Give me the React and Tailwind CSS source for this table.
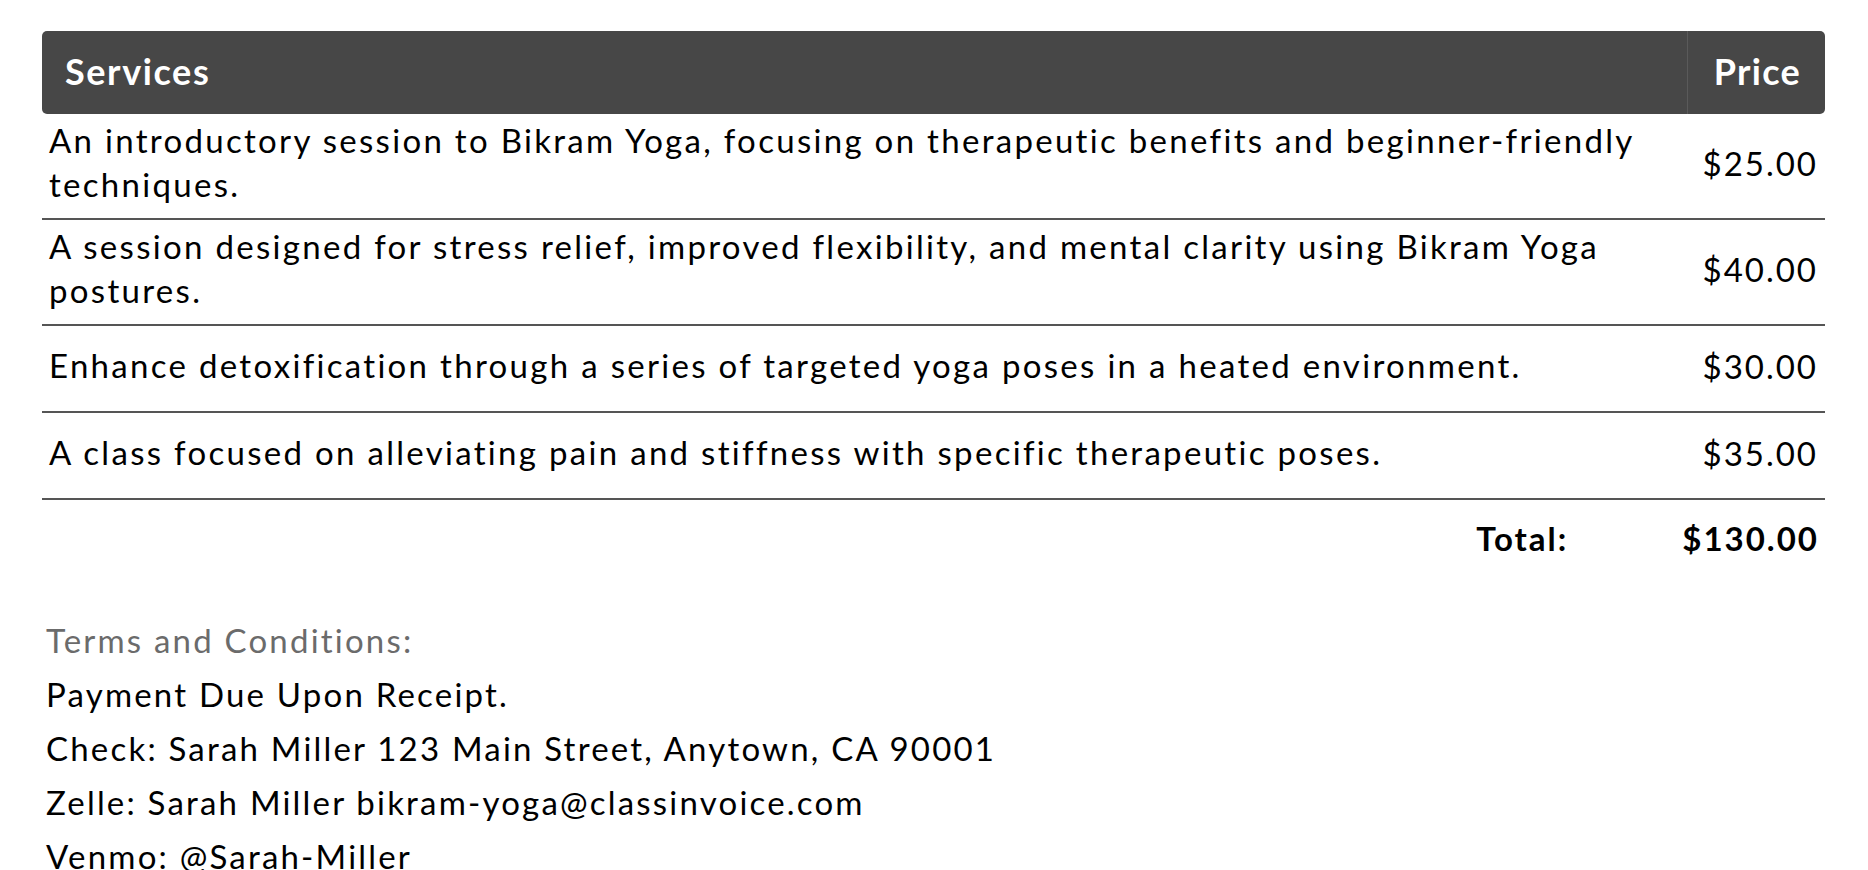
const items = [
  {
    desc: "An introductory session to Bikram Yoga, focusing on therapeutic benefits and beginner-friendly techniques.",
    price: "$25.00",
  },
  {
    desc: "A session designed for stress relief, improved flexibility, and mental clarity using Bikram Yoga postures.",
    price: "$40.00",
  },
  {
    desc: "Enhance detoxification through a series of targeted yoga poses in a heated environment.",
    price: "$30.00",
  },
  {
    desc: "A class focused on alleviating pain and stiffness with specific therapeutic poses.",
    price: "$35.00",
  },
];

const App = () => {
  return (
    <div
      className="min-h-screen bg-white text-black pl-[42px] pr-[43px] pt-[31px]"
      style={{ fontFamily: "Lato, 'Noto Sans', sans-serif" }}
    >
      {/* Services table */}
      <table className="w-full border-collapse">
        <thead>
          <tr className="h-[83px]">
            <th className="bg-[#474747] text-white text-left font-bold text-[36px] tracking-[1.6px] pl-[23px] pb-[4px] rounded-l-[5px]">
              Services
            </th>
            <th className="bg-[#474747] text-white text-right font-bold text-[36px] tracking-[1.3px] pr-[24px] pb-[4px] w-[138px] border-l border-[#5a5a5a] rounded-r-[5px]">
              Price
            </th>
          </tr>
        </thead>
        <tbody>
          {items.map((item) => (
            <tr key={item.price} className="h-[87px] border-b-2 border-[#555555]">
              <td className="text-[33px] tracking-[2.3px] leading-[44px] pl-[7px] pr-[8px] pt-[4px] pb-[12px] align-middle">
                {item.desc}
              </td>
              <td className="text-[33px] tracking-[2px] leading-[44px] text-right pr-[7px] pt-[4px] pb-[10px] align-middle whitespace-nowrap">
                {item.price}
              </td>
            </tr>
          ))}
        </tbody>
      </table>

      {/* Total */}
      <div className="flex justify-end items-center h-[84px] pb-[6px] font-bold text-[33px] tracking-[2px]">
        <span className="mr-[114px]">Total:</span>
        <span className="pr-[6px]">$130.00</span>
      </div>

      {/* Terms */}
      <div className="mt-[29px] pl-[4px] text-[33px] tracking-[2.2px] leading-[54px]">
        <div className="text-[#6b6b6b]">Terms and Conditions:</div>
        <div>Payment Due Upon Receipt.</div>
        <div>Check: Sarah Miller 123 Main Street, Anytown, CA 90001</div>
        <div>Zelle: Sarah Miller bikram-yoga@classinvoice.com</div>
        <div>Venmo: @Sarah-Miller</div>
      </div>
    </div>
  );
};

export default App;
